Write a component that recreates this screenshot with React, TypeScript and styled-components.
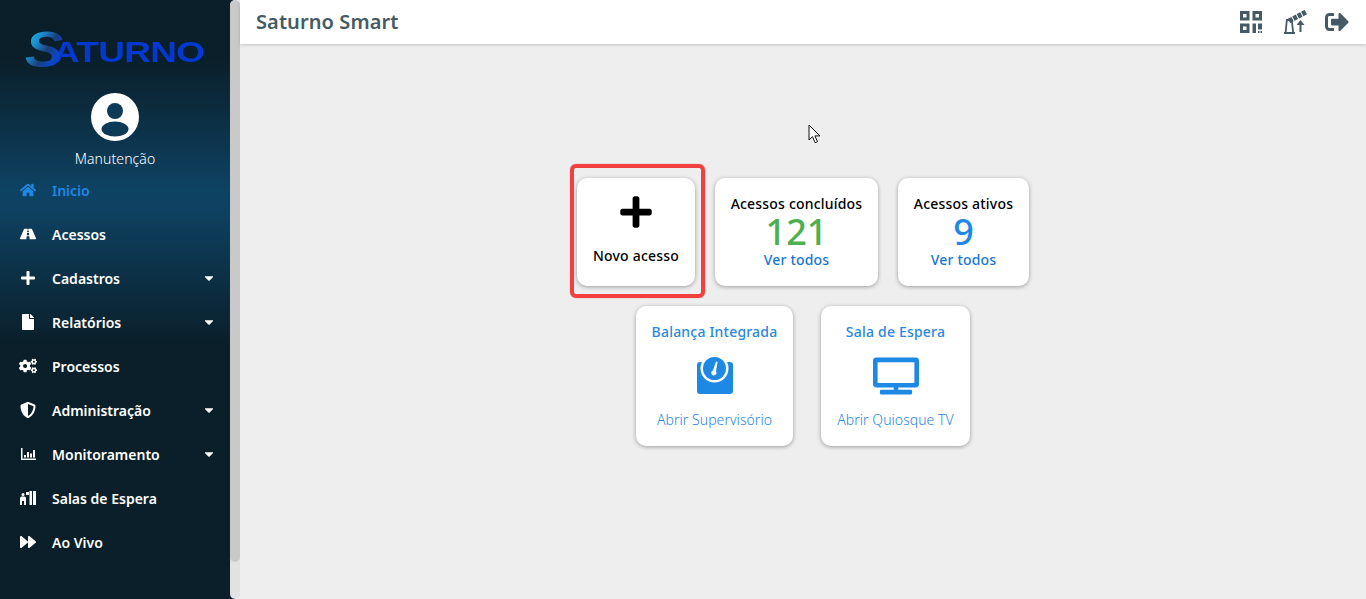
import React from "react";
import styled, { createGlobalStyle } from "styled-components";
import {
  FaHome,
  FaRoad,
  FaPlus,
  FaFile,
  FaCogs,
  FaShieldAlt,
  FaForward,
  FaSignOutAlt,
  FaTv,
  FaCaretDown,
} from "react-icons/fa";

const GlobalStyle = createGlobalStyle`
  html, body {
    margin: 0;
    height: 100%;
    overflow: hidden;
  }
  body {
    font-family: "Noto Sans", "Open Sans", sans-serif;
    background: #eeeeee;
  }
`;

const Page = styled.div`
  display: flex;
  height: 599px;
  width: 1366px;
  overflow: hidden;
`;

const Sidebar = styled.aside`
  width: 230px;
  flex-shrink: 0;
  background: linear-gradient(180deg, #0a1f29 0, #0a1f29 60px, #0e4263 190px, #0e4263 205px, #0a1f29 345px, #0a1f29 100%);
  display: flex;
  flex-direction: column;
`;

const LogoWrap = styled.div`
  height: 93px;
  padding: 31px 0 0 25px;
  box-sizing: border-box;
  display: flex;
  align-items: flex-start;
`;

const LogoS = styled.span`
  position: relative;
  z-index: 1;
  font-family: "Liberation Sans", sans-serif;
  font-weight: 700;
  font-style: italic;
  font-size: 50px;
  line-height: 38px;
  background: linear-gradient(120deg, #1cc8e0 0%, #1a8fd0 28%, #1b3f7c 52%, #0a46c8 72%, #0438cf 100%);
  -webkit-background-clip: text;
  background-clip: text;
  color: transparent;
  transform: scaleX(1.14);
  transform-origin: left center;
  width: 28px;
  padding-right: 8px;
  margin-right: -8px;
`;

const LogoRest = styled.span`
  font-family: "Liberation Sans", sans-serif;
  font-weight: 700;
  font-size: 30px;
  line-height: 22px;
  color: #0438cf;
  margin-top: 10px;
  transform: scaleX(1.23);
  transform-origin: left center;
  letter-spacing: -0.5px;
`;

const Profile = styled.div`
  display: flex;
  flex-direction: column;
  align-items: center;
  height: 76px;
`;

const Avatar = styled.svg`
  width: 48px;
  height: 48px;
  flex-shrink: 0;
  display: block;
`;

const ProfileName = styled.div`
  margin-top: 8px;
  color: #ffffff;
  font-size: 14px;
  font-weight: 300;
  line-height: 20px;
  letter-spacing: 0.1px;
`;

const Menu = styled.nav`
  display: flex;
  flex-direction: column;
  margin-top: -1px;
`;

const MenuItem = styled.div<{ $active?: boolean }>`
  height: 44px;
  display: flex;
  align-items: center;
  padding: 0 15px 0 20px;
  color: ${(p) => (p.$active ? "#1e88e5" : "#ffffff")};
  font-size: 14px;
  font-weight: 600;
`;

const MenuIcon = styled.span`
  width: 32px;
  display: flex;
  align-items: center;
  font-size: 16px;
  flex-shrink: 0;
`;

const MenuLabel = styled.span`
  flex: 1;
`;

const CogsIcon = styled(FaCogs)`
  width: 18px;
  height: 18px;
  margin-left: -1px;
`;

const Caret = styled(FaCaretDown)`
  width: 12px;
  height: 14px;
`;

const ScrollGutter = styled.div`
  width: 10px;
  flex-shrink: 0;
  background: linear-gradient(90deg, #0a1f29 50%, #eeeeee 50%);
  display: flex;
`;

const ScrollTrack = styled.div`
  width: 10px;
  background: #e2e2e2;
  border-radius: 5px;
  overflow: hidden;
`;

const ScrollThumb = styled.div`
  width: 10px;
  height: 562px;
  background: #c9c9c9;
  border-radius: 5px;
`;

const Main = styled.main`
  flex: 1;
  display: flex;
  flex-direction: column;
  position: relative;
`;

const Header = styled.header`
  height: 44px;
  flex-shrink: 0;
  background: #ffffff;
  box-shadow: 0 1px 3px rgba(0, 0, 0, 0.18);
  display: flex;
  align-items: center;
  padding: 0 17px 0 16px;
`;

const Title = styled.h1`
  flex: 1;
  margin: -2px 0 0;
  font-size: 20px;
  font-weight: 600;
  letter-spacing: 0.1px;
  color: #455a64;
`;

const HeaderIcons = styled.div`
  display: flex;
  align-items: center;
  gap: 18px;
  color: #455a64;
`;

const QrIcon = styled.svg`
  margin-right: 3px;
`;

const Content = styled.div`
  display: flex;
  flex-direction: column;
  align-items: center;
  gap: 20px;
  padding-top: 134px;
`;

const Row = styled.div<{ $gap: number }>`
  display: flex;
  gap: ${(p) => p.$gap}px;
`;

const Card = styled.div<{ $w: number; $h: number }>`
  position: relative;
  width: ${(p) => p.$w}px;
  height: ${(p) => p.$h}px;
  box-sizing: border-box;
  background: #ffffff;
  border-radius: 10px;
  box-shadow: 0 1px 4px rgba(0, 0, 0, 0.35);
  display: flex;
  flex-direction: column;
  align-items: center;
`;

const Highlight = styled.div`
  position: absolute;
  left: -7px;
  top: -14px;
  width: 127px;
  height: 126px;
  border: 4px solid #f04040;
  border-radius: 6px;
  box-shadow: 0 0 1px #f04040;
`;

const PlusIcon = styled(FaPlus)`
  width: 36px;
  height: 36px;
  color: #000000;
  margin-top: 16px;
`;

const NewLabel = styled.div`
  margin-top: 16px;
  font-size: 14px;
  font-weight: 500;
  letter-spacing: 0.2px;
  line-height: 20px;
  color: #000000;
`;

const StatTitle = styled.div`
  margin-top: 16px;
  font-size: 14px;
  font-weight: 500;
  letter-spacing: 0.2px;
  line-height: 20px;
  color: #000000;
`;

const StatValue = styled.div<{ $color: string }>`
  font-size: 36px;
  font-weight: 500;
  line-height: 35px;
  margin-bottom: 2px;
  color: ${(p) => p.$color};
`;

const StatLink = styled.div`
  font-size: 14px;
  font-weight: 500;
  letter-spacing: 0.2px;
  line-height: 18px;
  color: #1976d2;
`;

const ActionTitle = styled.div`
  margin-top: 16px;
  font-size: 14px;
  font-weight: 500;
  letter-spacing: 0.2px;
  line-height: 20px;
  color: #2a86e0;
`;

const ActionIcon = styled.div`
  height: 37px;
  margin-top: 15px;
  color: #1e88e5;
  display: flex;
  align-items: center;
`;

const ActionLink = styled.div`
  margin-top: 16px;
  font-size: 14px;
  font-weight: 300;
  letter-spacing: 0.05px;
  line-height: 20px;
  color: #2a86e0;
`;

const CursorMark = styled.svg`
  position: absolute;
  left: 568px;
  top: 124px;
`;

const menu = [
  { label: "Inicio", icon: <FaHome />, active: true },
  { label: "Acessos", icon: <FaRoad /> },
  { label: "Cadastros", icon: <FaPlus size={16} />, caret: true },
  { label: "Relatórios", icon: <FaFile size={16} />, caret: true },
  { label: "Processos", icon: <CogsIcon /> },
  { label: "Administração", icon: <FaShieldAlt size={16} />, caret: true },
  {
    label: "Monitoramento",
    icon: (
      <svg width="16" height="14" viewBox="0 0 16 14" fill="currentColor">
        <path d="M1 1h1.5v10.5H16V13H1z" />
        <path d="M4 8h2v2.5H4zM7 5h2v5.5H7zM10 6.5h2v4h-2zM13 3h2v7.5h-2z" />
      </svg>
    ),
    caret: true,
  },
  {
    label: "Salas de Espera",
    icon: (
      <svg width="16" height="14" viewBox="0 0 16 14" fill="currentColor">
        <circle cx="3" cy="3.5" r="1.5" />
        <path d="M0 14V7q0-1.5 1.5-1.5h3Q6 5.5 6 7v7H4V10H2v4z" />
        <path d="M6 1h3v3H6zM9.5 0h2.5v14H9.5zM13 0h3v14h-3z" />
      </svg>
    ),
  },
  { label: "Ao Vivo", icon: <FaForward size={16} /> },
];

export default function App() {
  return (
    <Page>
      <GlobalStyle />
      <Sidebar>
        <LogoWrap>
          <LogoS>S</LogoS>
          <LogoRest>ATURNO</LogoRest>
        </LogoWrap>
        <Profile>
          <Avatar viewBox="0 0 48 48">
            <circle cx="24" cy="24" r="24" fill="#ffffff" />
            <circle cx="24" cy="18" r="8" fill="#0d3a56" />
            <ellipse cx="24" cy="36" rx="13.5" ry="7.5" fill="#0d3a56" />
          </Avatar>
          <ProfileName>Manutenção</ProfileName>
        </Profile>
        <Menu>
          {menu.map((item) => (
            <MenuItem key={item.label} $active={item.active}>
              <MenuIcon>{item.icon}</MenuIcon>
              <MenuLabel>{item.label}</MenuLabel>
              {item.caret && <Caret />}
            </MenuItem>
          ))}
        </Menu>
      </Sidebar>
      <ScrollGutter>
        <ScrollTrack>
          <ScrollThumb />
        </ScrollTrack>
      </ScrollGutter>
      <Main>
        <Header>
          <Title>Saturno Smart</Title>
          <HeaderIcons>
            <QrIcon width="22" height="22" viewBox="0 0 22 22" fill="currentColor">
              <path fillRule="evenodd" d="M0 0h9.500v9.500H0zM3 3v3.500h3.500V3z" />
              <path fillRule="evenodd" d="M12.500 0H22v9.500h-9.500zM15.500 3v3.500H19V3z" />
              <path fillRule="evenodd" d="M0 12.500h9.500V22H0zM3 15.500V19h3.500v-3.500z" />
              <path d="M12.500 12.500h3.500V16h2v-3.500h4v6h-4V16h-2v6h-3.500z" />
              <path d="M18 20h1.500v2H18zM20.500 20H22v2h-1.500z" />
            </QrIcon>
            <svg width="24" height="24" viewBox="0 0 24 24" fill="currentColor">
              <line
                x1="6"
                y1="11"
                x2="23"
                y2="2"
                stroke="currentColor"
                strokeWidth="5"
                strokeDasharray="4 1"
              />
              <path d="M3 9h6.500l1.500 13H9.200L8 11H4.600L3.600 22H1.800z" />
              <path d="M1 22h11v2H1z" />
              <path d="M16.500 22v-7h-3l4-5 4 5h-3v7z" />
            </svg>
            <FaSignOutAlt size={24} />
          </HeaderIcons>
        </Header>
        <Content>
          <Row $gap={20}>
            <Card $w={118} $h={108}>
              <Highlight />
              <PlusIcon />
              <NewLabel>Novo acesso</NewLabel>
            </Card>
            <Card $w={163} $h={108}>
              <StatTitle>Acessos concluídos</StatTitle>
              <StatValue $color="#4caf50">121</StatValue>
              <StatLink>Ver todos</StatLink>
            </Card>
            <Card $w={131} $h={108}>
              <StatTitle>Acessos ativos</StatTitle>
              <StatValue $color="#1e88e5">9</StatValue>
              <StatLink>Ver todos</StatLink>
            </Card>
          </Row>
          <Row $gap={28}>
            <Card $w={157} $h={140}>
              <ActionTitle>Balança Integrada</ActionTitle>
              <ActionIcon>
                <svg width="36" height="37" viewBox="0 0 36 37">
                  <path
                    fill="currentColor"
                    d="M3 5h30a3 3 0 0 1 3 3v26a3 3 0 0 1-3 3H3a3 3 0 0 1-3-3V8a3 3 0 0 1 3-3z"
                  />
                  <circle cx="17.500" cy="11.500" r="14" fill="#ffffff" />
                  <circle cx="17.500" cy="11.500" r="11.500" fill="currentColor" />
                  <path fill="#ffffff" d="M19 4.500l1.500.5-1.500 9.500a2.500 2.500 0 1 1-3-1z" />
                </svg>
              </ActionIcon>
              <ActionLink>Abrir Supervisório</ActionLink>
            </Card>
            <Card $w={149} $h={140}>
              <ActionTitle>Sala de Espera</ActionTitle>
              <ActionIcon>
                <FaTv size={46} />
              </ActionIcon>
              <ActionLink>Abrir Quiosque TV</ActionLink>
            </Card>
          </Row>
        </Content>
        <CursorMark width="13" height="20" viewBox="0 0 13 20">
          <path
            d="M1 1v15l3.500-3.300 2.600 6 2.400-1-2.600-5.800H12z"
            fill="#ffffff"
            stroke="#111111"
            strokeWidth="1"
          />
        </CursorMark>
      </Main>
    </Page>
  );
}
